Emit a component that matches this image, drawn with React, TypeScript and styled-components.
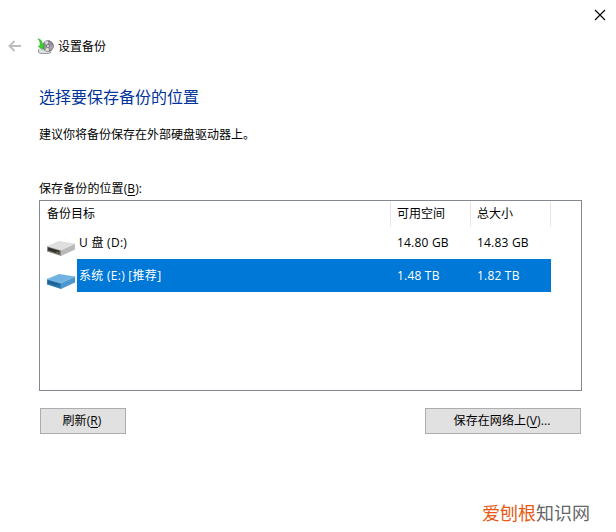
import React from "react";
import styled, { createGlobalStyle } from "styled-components";

const GlobalStyle = createGlobalStyle`
  * { box-sizing: border-box; }
  body {
    margin: 0;
    background: #fff;
    color: #000;
    font: 12px/16px "Open Sans", "Noto Sans CJK SC", sans-serif;
  }
`;

const Dialog = styled.main`
  width: 616px;
  height: 532px;
  display: flex;
  flex-direction: column;
  background: #fff;
  overflow: hidden;
  white-space: nowrap;
`;

const TitleBar = styled.div`
  height: 30px;
  display: flex;
  justify-content: flex-end;
  align-items: center;
  padding-right: 10px;
`;

const Glyph = styled.svg`
  display: block;
  flex: none;
`;

const WizardHeader = styled.header`
  height: 32px;
  display: flex;
  align-items: center;
  padding-left: 8px;
`;

const WizardIcon = styled(Glyph)`
  margin: 0 4px 0 15px;
`;

const WizardTitle = styled.span`
  padding-top: 2px;
`;

const Content = styled.section`
  display: flex;
  flex-direction: column;
  padding: 23px 34px 0 39px;
`;

const Heading = styled.h1`
  margin: 0;
  font-size: 16px;
  line-height: 24px;
  font-weight: 400;
  color: #003399;
`;

const Hint = styled.p`
  margin: 18px 0 38px;
`;

const Label = styled.label`
  margin-bottom: 3px;
  letter-spacing: 0.1px;
`;

const Table = styled.div`
  width: 543px;
  height: 191px;
  border: 1px solid #828790;
  padding-top: 1px;
`;

const COLUMNS = "351px 80px 80px";

const TableHead = styled.div`
  display: grid;
  grid-template-columns: ${COLUMNS};
  height: 24px;
`;

const HeadCell = styled.div`
  display: flex;
  align-items: center;
  padding-left: 7px;
  border-right: 1px solid #e5e5e5;
  &:not(:first-child) { padding-left: 6px; }
`;

const DriveRow = styled.div`
  display: flex;
  height: 33px;
  padding-left: 6px;
`;

const IconSlot = styled.div`
  width: 31px;
  padding-top: 14px;
`;

const RowCells = styled.div<{ $selected?: boolean }>`
  display: grid;
  grid-template-columns: 314px 80px 80px;
  align-items: center;
  width: 474px;
  background: ${(p) => (p.$selected ? "#0078d7" : "transparent")};
  color: ${(p) => (p.$selected ? "#fff" : "#000")};
`;

const Cell = styled.span<{ $numeric?: boolean }>`
  padding-left: ${(p) => (p.$numeric ? 6 : 2)}px;
  letter-spacing: ${(p) => (p.$numeric ? 0.2 : 0.28)}px;
`;

const Actions = styled.div`
  display: flex;
  justify-content: space-between;
  margin-top: 17px;
  padding: 0 1px;
`;

const Button = styled.button<{ $width: number }>`
  width: ${(p) => p.$width}px;
  height: 26px;
  padding: 0 2px 1px 0;
  border: 1px solid #adadad;
  background: #e1e1e1;
  font: inherit;
  letter-spacing: 0.1px;
  color: #000;
`;

const AccessKey = styled.u`
  text-underline-offset: 2px;
  text-decoration-skip-ink: none;
`;

const Footer = styled.footer`
  margin-top: auto;
  height: 39px;
  padding-right: 26px;
  text-align: right;
  font: 400 18px/38px "Noto Sans CJK SC", sans-serif;
  color: #666;
`;

const Brand = styled.span`
  color: #e65a16;
`;

type DriveColors = { top: string; front: string; side: string; slot: string; light: string; led: string };

const GREY: DriveColors = { top: "#dfdfdf", front: "#8b8985", side: "#b9b9b9", slot: "#35332f", light: "#ededed", led: "#9a9a35" };
const BLUE: DriveColors = { top: "#70b2e2", front: "#2e7fb8", side: "#4c98ce", slot: "#1e6499", light: "#82bfe9", led: "#2b7cae" };

const DriveIcon = ({ c }: { c: DriveColors }) => (
  <Glyph width="30" height="17" viewBox="0 0 30 17">
    <path d="M1 6 13 1 29 3.5 15 10Z" fill={c.top} />
    <path d="M1 6 15 10V16L1 11.5Z" fill={c.front} />
    <path d="M15 10 29 3.5V9.5L15 16Z" fill={c.side} />
    <path d="M2 7.3 13.5 10.8V14.2L2 10.6Z" fill={c.slot} />
    <path d="M10.5 12.3 12.5 12.9" stroke={c.led} />
    <path d="M1 6 15 10 29 3.5" fill="none" stroke={c.light} strokeWidth=".6" />
  </Glyph>
);

const BackupIcon = () => (
  <WizardIcon width="17" height="18" viewBox="0 0 17 18">
    <path d="M1 12 4 9H12L15 13V15L13 17H3L1 15.5Z" fill="#dcdfe0" />
    <path d="M1.5 12.5V15L3.5 16.5H11.5L14 15" fill="none" stroke="#858585" strokeWidth=".8" />
    <circle cx="11" cy="9" r="5.3" fill="#96959d" stroke="#5c5b62" strokeWidth=".9" />
    <path d="M11 9 7.3 5.3A5 5 0 0 1 11 4Z" fill="#d5d6dd" />
    <path d="M11 9 16 8.3A5 5 0 0 1 14.2 12.7Z" fill="#b49fb8" />
    <path d="M11 9 12 14A5 5 0 0 1 8 13.2Z" fill="#e0dfce" />
    <circle cx="11" cy="9" r="1.5" fill="#f4f4f4" stroke="#55555a" strokeWidth=".7" />
    <path d="M.8 1.8C3.5 2 5.2 4 5.5 7.5L7.6 7 5.2 12.6 1.2 9.2 3.2 8.6C3.3 5.8 2.7 3.4.8 1.8Z" fill="#35d22b" stroke="#24ad20" strokeWidth=".5" />
  </WizardIcon>
);

const drives = [
  { name: "U 盘 (D:)", free: "14.80 GB", total: "14.83 GB", colors: GREY, selected: false },
  { name: "系统 (E:) [推荐]", free: "1.48 TB", total: "1.82 TB", colors: BLUE, selected: true },
];

export default function App() {
  return (
    <>
      <GlobalStyle />
      <Dialog>
        <TitleBar>
          <Glyph width="12" height="12" viewBox="0 0 12 12">
            <path d="M1 1 11 11M11 1 1 11" stroke="#000" strokeWidth="1.1" />
          </Glyph>
        </TitleBar>
        <WizardHeader>
          <Glyph width="14" height="12" viewBox="0 0 14 12" fill="none" stroke="#bcbcbc" strokeWidth="1.8">
            <path d="M13 6H2M6.5 1 1.5 6 6.5 11" />
          </Glyph>
          <BackupIcon />
          <WizardTitle>设置备份</WizardTitle>
        </WizardHeader>
        <Content>
          <Heading>选择要保存备份的位置</Heading>
          <Hint>建议你将备份保存在外部硬盘驱动器上。</Hint>
          <Label>保存备份的位置(<AccessKey>B</AccessKey>):</Label>
          <Table>
            <TableHead>
              <HeadCell>备份目标</HeadCell>
              <HeadCell>可用空间</HeadCell>
              <HeadCell>总大小</HeadCell>
            </TableHead>
            {drives.map((d) => (
              <DriveRow key={d.name}>
                <IconSlot><DriveIcon c={d.colors} /></IconSlot>
                <RowCells $selected={d.selected}>
                  <Cell>{d.name}</Cell>
                  <Cell $numeric>{d.free}</Cell>
                  <Cell $numeric>{d.total}</Cell>
                </RowCells>
              </DriveRow>
            ))}
          </Table>
          <Actions>
            <Button $width={86}>刷新(<AccessKey>R</AccessKey>)</Button>
            <Button $width={156}>保存在网络上(<AccessKey>V</AccessKey>)...</Button>
          </Actions>
        </Content>
        <Footer><Brand>爱刨根</Brand>知识网</Footer>
      </Dialog>
    </>
  );
}
